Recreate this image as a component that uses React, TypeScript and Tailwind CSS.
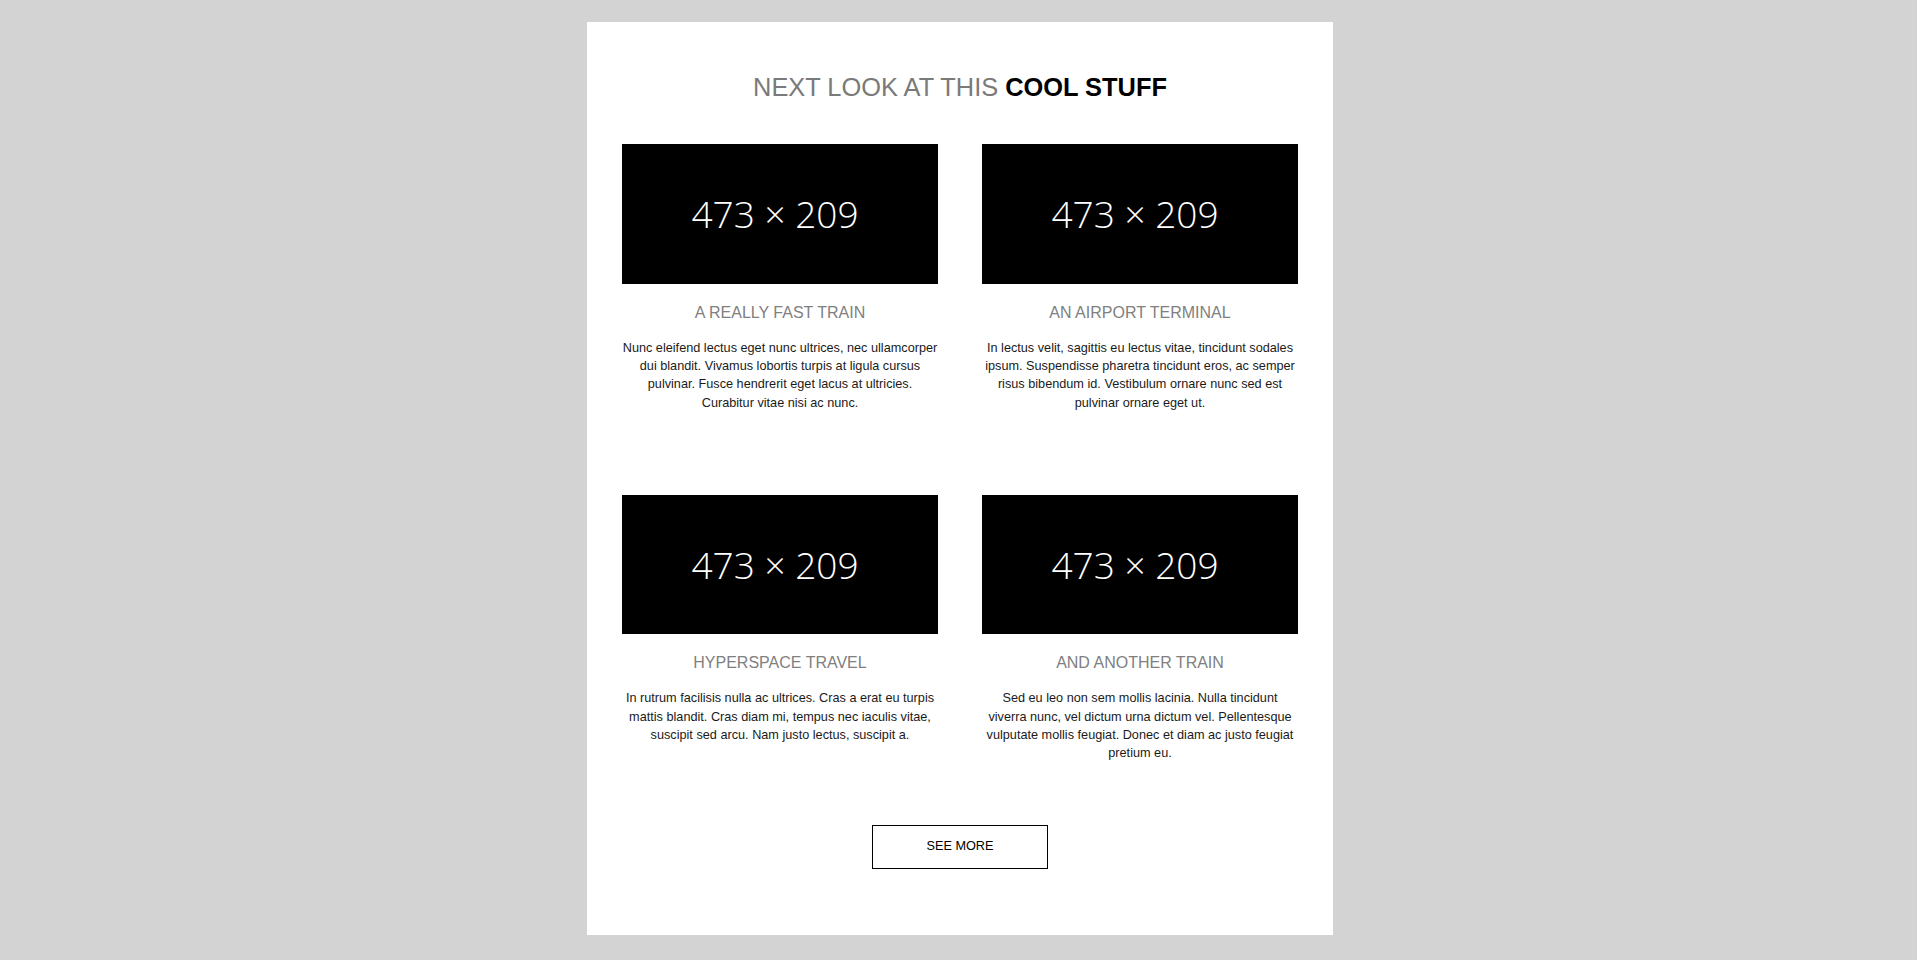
import React from 'react';

interface Item {
  title: string;
  text: string;
}

const items: Item[] = [
  {
    title: 'A REALLY FAST TRAIN',
    text: 'Nunc eleifend lectus eget nunc ultrices, nec ullamcorper dui blandit. Vivamus lobortis turpis at ligula cursus pulvinar. Fusce hendrerit eget lacus at ultricies. Curabitur vitae nisi ac nunc.',
  },
  {
    title: 'AN AIRPORT TERMINAL',
    text: 'In lectus velit, sagittis eu lectus vitae, tincidunt sodales ipsum. Suspendisse pharetra tincidunt eros, ac semper risus bibendum id. Vestibulum ornare nunc sed est pulvinar ornare eget ut.',
  },
  {
    title: 'HYPERSPACE TRAVEL',
    text: 'In rutrum facilisis nulla ac ultrices. Cras a erat eu turpis mattis blandit. Cras diam mi, tempus nec iaculis vitae, suscipit sed arcu. Nam justo lectus, suscipit a.',
  },
  {
    title: 'AND ANOTHER TRAIN',
    text: 'Sed eu leo non sem mollis lacinia. Nulla tincidunt viverra nunc, vel dictum urna dictum vel. Pellentesque vulputate mollis feugiat. Donec et diam ac justo feugiat pretium eu.',
  },
];

const Placeholder: React.FC = () => (
  <div className="w-full aspect-[473/209] bg-black flex items-center justify-center">
    <span
      className="pr-[10px] text-white font-extralight text-[37px] leading-none"
      style={{ fontFamily: '"Open Sans", sans-serif' }}
    >
      473 × 209
    </span>
  </div>
);

const Card: React.FC<{ item: Item }> = ({ item }) => (
  <div className="flex flex-col items-center">
    <Placeholder />
    <h3 className="mt-[19px] text-[16px] leading-[20px] text-[#808080] font-normal">
      {item.title}
    </h3>
    <p className="mt-[16px] text-[12.7px] leading-[18.3px] text-[#1a1a1a] text-center">
      {item.text}
    </p>
  </div>
);

export default function App() {
  return (
    <div
      className="min-h-screen bg-[#d3d3d3] pt-[22px] pb-[26px] pl-[3px]"
      style={{ fontFamily: '"Liberation Sans", Arial, sans-serif' }}
    >
      <div className="mx-auto w-[746px] bg-white px-[35px] pt-[50px] pb-[66px]">
        <h2 className="text-center text-[25.4px] leading-[30px] text-[#7a7a7a] font-normal">
          NEXT LOOK AT THIS <span className="font-bold text-black">COOL STUFF</span>
        </h2>

        <div className="mt-[42px] grid grid-cols-2 gap-x-[44px] gap-y-[83px]">
          {items.map((item) => (
            <Card key={item.title} item={item} />
          ))}
        </div>

        <div className="mt-[62px] flex justify-center">
          <button className="w-[176px] h-[44px] border border-black bg-white text-[12.7px] text-black">
            SEE MORE
          </button>
        </div>
      </div>
    </div>
  );
}
